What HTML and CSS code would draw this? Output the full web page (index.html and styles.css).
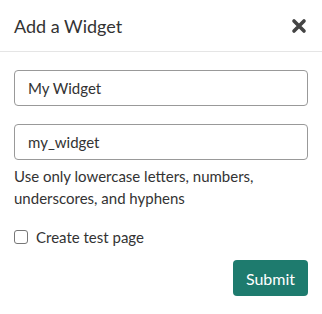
FILE: index.html
```html
<!DOCTYPE html>
<html lang="en">
<head>
    <meta charset="UTF-8">
    <meta name="viewport" content="width=device-width, initial-scale=1.0">
    <title>Add a Widget</title>
    <link rel="stylesheet" href="styles.css">
</head>
<body>

<div class="modal">
    <div class="modal-header">
        <h1>Add a Widget</h1>
        <button class="close-btn" aria-label="Close">
            <svg width="16" height="16" viewBox="0 0 16 16">
                <path d="M3 3 L13 13 M13 3 L3 13" stroke="#444" stroke-width="3.6" stroke-linecap="round"/>
            </svg>
        </button>
    </div>

    <div class="modal-body">
        <input type="text" class="input-field" value="My Widget">
        <input type="text" class="input-field" value="my_widget">
        <p class="help">Use only lowercase letters, numbers, underscores, and hyphens</p>

        <label class="check">
            <input type="checkbox">
            <span>Create test page</span>
        </label>

        <div class="actions">
            <button class="button">Submit</button>
        </div>
    </div>
</div>

</body>
</html>
```

FILE: styles.css
```css
body {
    margin: 0;
    background-color: #fff;
    color: #333;
    font-family: Lato, "Noto Sans", sans-serif;
}
.modal {
    width: 322px;
}
.modal-header {
    display: flex;
    justify-content: space-between;
    align-items: center;
    height: 52px;
    padding: 0 14px;
    border-bottom: 1px solid #e5e5e5;
    box-sizing: border-box;
}
h1 {
    margin: 0;
    font-size: 18px;
    font-weight: normal;
    color: #333;
}
.close-btn {
    background: none;
    border: none;
    padding: 0;
    width: 18px;
    height: 18px;
    display: flex;
    align-items: center;
    justify-content: center;
    cursor: pointer;
}
.modal-body {
    padding: 18px 14px 0;
}
.input-field {
    display: block;
    width: 100%;
    height: 36px;
    box-sizing: border-box;
    padding: 0 13px;
    border: 1px solid #999;
    border-radius: 4px;
    font-family: inherit;
    font-size: 15px;
    color: #333;
    margin-bottom: 18px;
}
.input-field + .help {
    margin-top: -13px;
}
.help {
    margin: 0 0 12px;
    font-size: 15px;
    line-height: 22px;
}
.check {
    display: flex;
    align-items: center;
    gap: 8px;
    font-size: 15px;
    margin-top: 19px;
}
.check input {
    appearance: none;
    margin: 0;
    width: 14px;
    height: 14px;
    border: 1px solid #777;
    border-radius: 3px;
    background: #fff;
}
.actions {
    display: flex;
    justify-content: flex-end;
    margin-top: 14px;
}
.button {
    background-color: #1e7b6e;
    color: #fff;
    font-family: inherit;
    font-size: 16px;
    height: 36px;
    width: 75px;
    border: none;
    border-radius: 4px;
    cursor: pointer;
}
```
